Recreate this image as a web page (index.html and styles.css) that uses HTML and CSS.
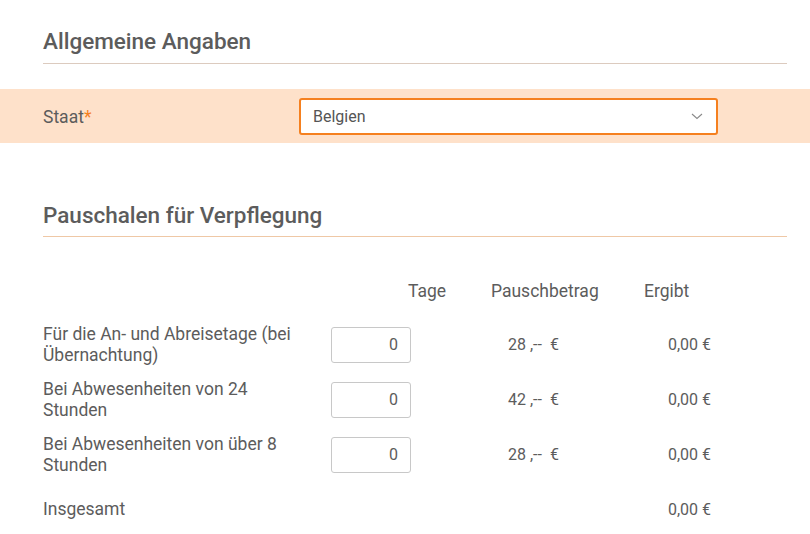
FILE: index.html
```
<!DOCTYPE html>
<html lang="de">
  <head>
    <meta charset="UTF-8" />
    <meta name="viewport" content="width=device-width, initial-scale=1.0" />
    <title>Verpflegung</title>
    <link rel="stylesheet" href="styles.css">
  </head>
  <body>
    <div class="wrap">
      <h2 class="title first">Allgemeine Angaben</h2>
    </div>
    <div class="band">
      <div class="wrap band-row">
        <label class="band-label">Staat<span class="req">*</span></label>
        <div class="select">
          <span>Belgien</span>
          <svg width="12" height="7" viewBox="0 0 12 7"><path d="M1 1 L6 5.5 L11 1" fill="none" stroke="#8a8a8a" stroke-width="1.1"/></svg>
        </div>
      </div>
    </div>
    <div class="wrap">
      <h2 class="title second">Pauschalen für Verpflegung</h2>
      <div class="head">
        <div class="h-tage">Tage</div>
        <div class="h-betrag">Pauschbetrag</div>
        <div class="h-ergibt">Ergibt</div>
      </div>
      <div class="row">
        <div class="lbl">Für die An- und Abreisetage (bei Übernachtung)</div>
        <input class="num" type="text" value="0">
        <div class="amt">28 ,--&nbsp; €</div>
        <div class="res">0,00 €</div>
      </div>
      <div class="row">
        <div class="lbl">Bei Abwesenheiten von 24 Stunden</div>
        <input class="num" type="text" value="0">
        <div class="amt">42 ,--&nbsp; €</div>
        <div class="res">0,00 €</div>
      </div>
      <div class="row">
        <div class="lbl">Bei Abwesenheiten von über 8 Stunden</div>
        <input class="num" type="text" value="0">
        <div class="amt">28 ,--&nbsp; €</div>
        <div class="res">0,00 €</div>
      </div>
      <div class="row">
        <div class="lbl">Insgesamt</div>
        <div class="gap"></div>
        <div class="amt"></div>
        <div class="res">0,00 €</div>
      </div>
    </div>
  </body>
</html>
```
FILE: styles.css
```
* {
  box-sizing: border-box;
}
body {
  margin: 0;
  font-family: Roboto, "Liberation Sans", sans-serif;
  font-size: 16px;
  color: #5c5c5c;
  background: #fff;
}
.wrap {
  margin-left: 43px;
  width: 744px;
}
.title {
  margin: 0;
  font-size: 22.5px;
  font-weight: 500;
  line-height: 24px;
  color: #5c5c5c;
  padding-bottom: 10px;
}
.title.first {
  padding-top: 29px;
  border-bottom: 1px solid #dccbbf;
}
.title.second {
  margin-top: 60px;
  padding-bottom: 9px;
  border-bottom: 1px solid #efc8a6;
}
.band {
  margin-top: 25px;
  height: 54px;
  background: #fee1ca;
}
.band-row {
  display: flex;
  align-items: center;
  height: 54px;
}
.band-label {
  width: 256px;
  font-size: 17.5px;
  padding-top: 1px;
}
.req {
  color: #f5801f;
}
.select {
  width: 419px;
  height: 37px;
  background: #fff;
  border: 2px solid #f5801f;
  border-radius: 3px;
  display: flex;
  align-items: center;
  justify-content: space-between;
  padding: 0 13px 0 12px;
  color: #555;
}
.select svg {
  margin-top: 1px;
}
.head {
  display: flex;
  margin-top: 42px;
  line-height: 24px;
  padding-left: 365px;
  font-size: 17.5px;
}
.h-tage {
  width: 83px;
}
.h-betrag {
  width: 153px;
}
.row {
  display: flex;
  align-items: center;
  height: 55px;
}
.head + .row {
  margin-top: 14px;
}
.lbl {
  width: 288px;
  line-height: 21px;
  padding-right: 24px;
  font-size: 17.5px;
}
.num {
  width: 80px;
  height: 36px;
  border: 1px solid #c8c8c8;
  border-radius: 3px;
  text-align: right;
  padding: 0 12px;
  font-family: inherit;
  font-size: 16px;
  color: #5c5c5c;
  outline: none;
}
.gap {
  width: 80px;
}
.amt {
  width: 232px;
  padding-left: 97px;
}
.res {
  width: 68px;
  text-align: right;
}
```
